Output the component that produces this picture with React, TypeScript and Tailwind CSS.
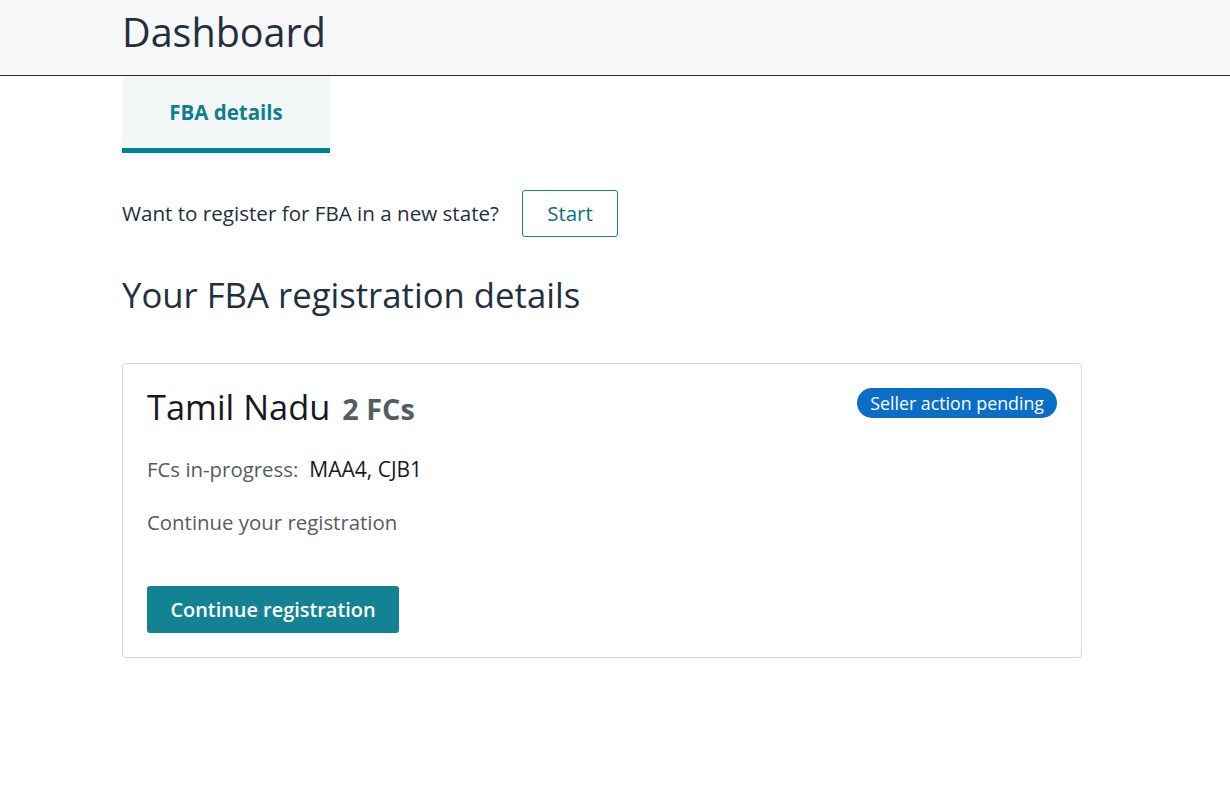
import React from 'react';

const font = { fontFamily: '"Open Sans", "Noto Sans", Arial, sans-serif' };

export default function App() {
  return (
    <div className="min-h-[800px] bg-white text-[#16191f]" style={font}>
      <header className="h-[76px] bg-[#f7f7f8] border-b border-[#232f3e]">
        <div className="pl-[122px] pt-[6px]">
          <h1 className="text-[39.5px] leading-[52px] text-[#232f3e]">Dashboard</h1>
        </div>
      </header>

      <main className="pl-[122px] w-[1082px]">
        <div className="flex">
          <div className="w-[208px] h-[77px] bg-[#f4f7f8] border-b-[5px] border-[#008296] flex items-center justify-center">
            <span className="text-[20.5px] font-bold text-[#0f7f8f]">FBA details</span>
          </div>
        </div>

        <div className="mt-[37px] flex items-center">
          <span className="text-[20.6px] text-[#232f3e]">Want to register for FBA in a new state?</span>
          <button className="ml-[23px] w-[96px] h-[47px] border border-[#1a7f8c] rounded-[3px] text-[20.5px] text-[#0f6f7a]">
            Start
          </button>
        </div>

        <h2 className="mt-[34px] text-[34.7px] leading-[48px] text-[#232f3e]">Your FBA registration details</h2>

        <section className="mt-[44px] border border-[#d5d9d9] rounded-[4px] pl-[24px] pr-[24px] pt-[21px] pb-[24px]">
          <div className="flex items-start justify-between">
            <div className="flex items-baseline gap-[12px]">
              <span className="text-[34.4px] leading-[44px] text-[#16191f]">Tamil Nadu</span>
              <span className="text-[28.8px] font-bold text-[#545b64]">2 FCs</span>
            </div>
            <span className="mt-[3px] h-[30px] px-[13px] rounded-full bg-[#0a6ec6] text-white text-[17.8px] flex items-center">
              Seller action pending
            </span>
          </div>

          <div className="mt-[25px] text-[20.4px] leading-[28px]">
            <span className="text-[#545b64]">FCs in-progress:</span>
            <span className="ml-[11px] text-[21px] text-[#16191f]">MAA4, CJB1</span>
          </div>

          <p className="mt-[25px] text-[20.4px] leading-[28px] text-[#545b64]">Continue your registration</p>

          <button className="mt-[50px] w-[252px] h-[47px] rounded-[3px] bg-[#138394] text-white text-[19.9px] font-semibold">
            Continue registration
          </button>
        </section>
      </main>
    </div>
  );
}
